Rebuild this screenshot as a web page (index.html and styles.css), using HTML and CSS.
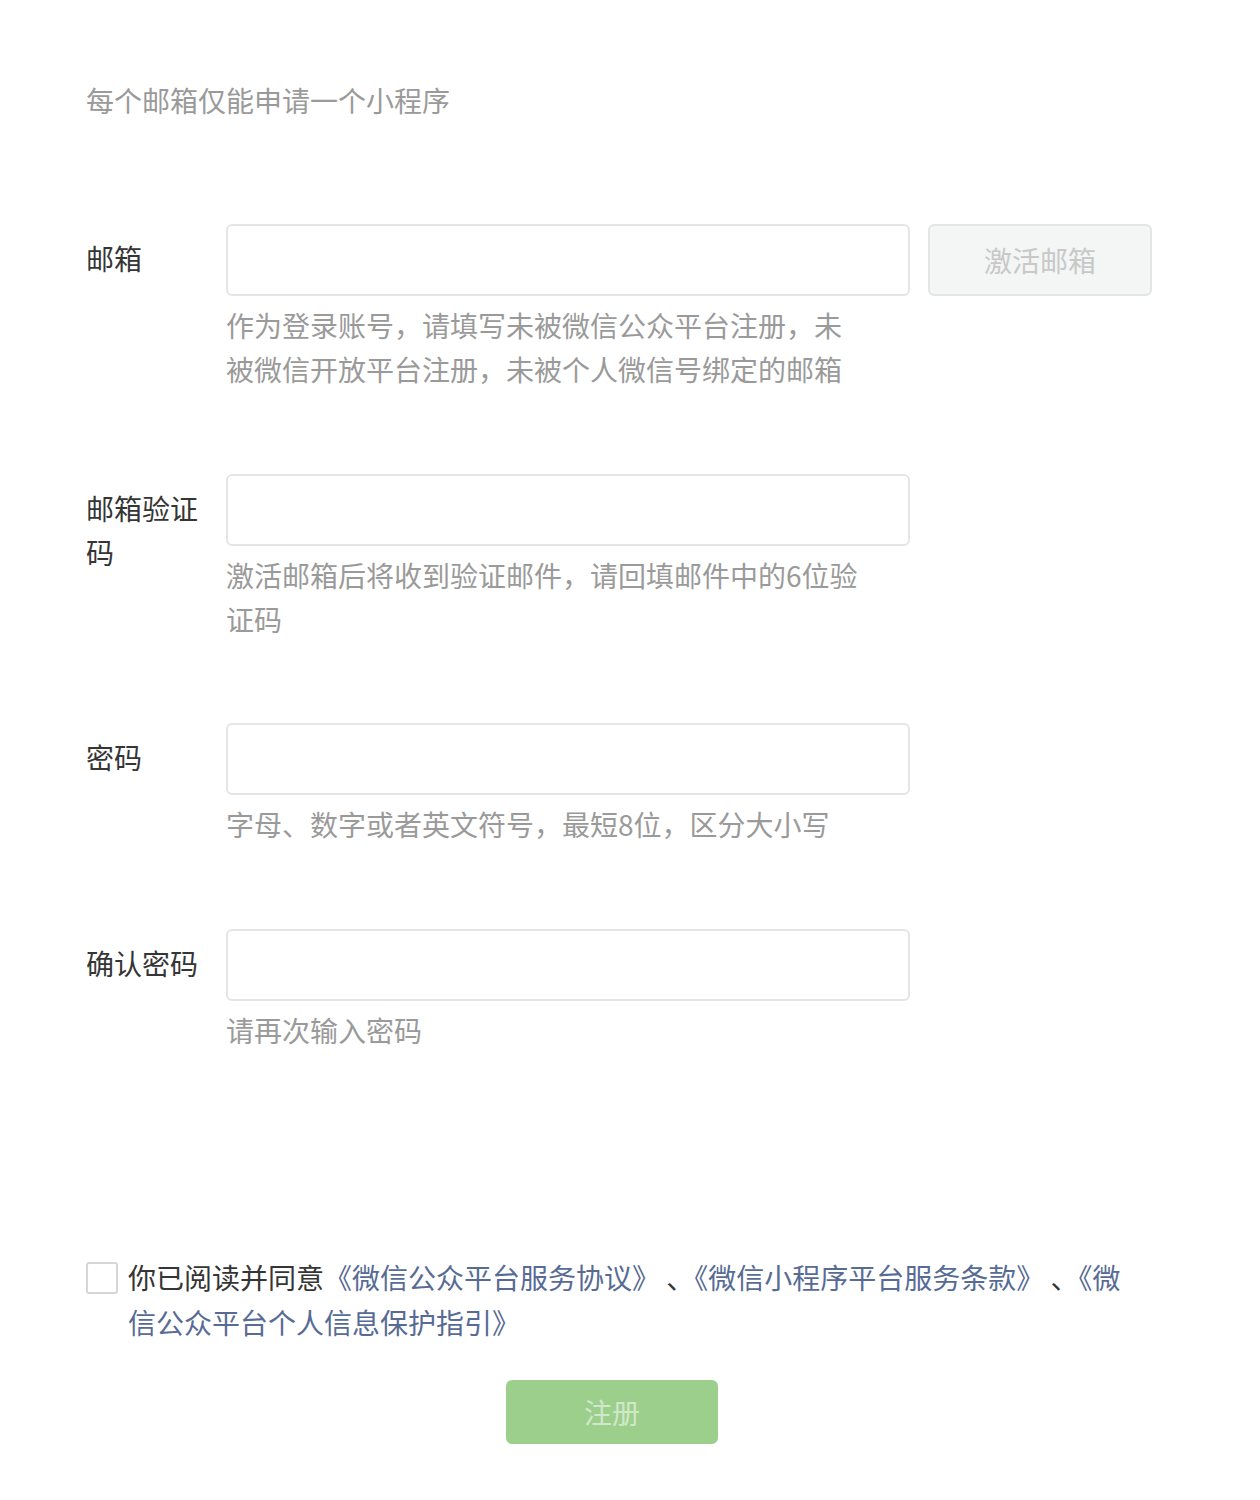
FILE: index.html
```html
<!DOCTYPE html>
<html lang="zh-CN">
<head>
<meta charset="utf-8">
<title>注册</title>
<link rel="stylesheet" href="styles.css">
</head>
<body>
<div class="page">
  <p class="tips">每个邮箱仅能申请一个小程序</p>
  <div class="form">
    <div class="row">
      <div class="label">邮箱</div>
      <div class="field">
        <div class="control">
          <input class="input" type="text">
          <button class="btn-activate" type="button">激活邮箱</button>
        </div>
        <p class="hint">作为登录账号，请填写未被微信公众平台注册，未被微信开放平台注册，未被个人微信号绑定的邮箱</p>
      </div>
    </div>
    <div class="row">
      <div class="label">邮箱验证码</div>
      <div class="field">
        <div class="control"><input class="input" type="text"></div>
        <p class="hint">激活邮箱后将收到验证邮件，请回填邮件中的6位验证码</p>
      </div>
    </div>
    <div class="row">
      <div class="label">密码</div>
      <div class="field">
        <div class="control"><input class="input" type="password"></div>
        <p class="hint">字母、数字或者英文符号，最短8位，区分大小写</p>
      </div>
    </div>
    <div class="row">
      <div class="label">确认密码</div>
      <div class="field">
        <div class="control"><input class="input" type="password"></div>
        <p class="hint">请再次输入密码</p>
      </div>
    </div>
  </div>
  <div class="agree">
    <span class="checkbox"></span>
    <p class="agree-text">你已阅读并同意<a class="link" href="#">《微信公众平台服务协议》</a> 、<a class="link" href="#">《微信小程序平台服务条款》</a> 、<a class="link" href="#">《微信公众平台个人信息保护指引》</a></p>
  </div>
  <div class="submit-wrap">
    <button class="btn-submit" type="button">注册</button>
  </div>
</div>
</body>
</html>
```
FILE: styles.css
```css
* { box-sizing: border-box; }
html, body { margin: 0; padding: 0; background: #fff; }
body {
  font-family: "PingFang SC", "Noto Sans CJK SC", "Noto Sans", sans-serif;
  font-size: 28px;
  color: #353535;
}
.page {
  padding: 78px 0 0 86px;
  width: 1260px;
}
.tips {
  margin: 0;
  line-height: 44px;
  color: #9a9a9a;
}
.form {
  margin-top: 102px;
}
.row {
  display: flex;
  margin-bottom: 82.5px;
}
.row:last-child {
  margin-bottom: 0;
}
.label {
  width: 130px;
  margin-right: 10px;
  padding-top: 12px;
  line-height: 44px;
  color: #353535;
  flex-shrink: 0;
}
.field {
  display: flex;
  flex-direction: column;
}
.control {
  display: flex;
  gap: 18px;
}
.input {
  width: 684px;
  height: 72px;
  border: 2px solid #e5e5e5;
  border-radius: 6px;
  background: #fff;
  outline: none;
  font: inherit;
  padding: 0 16px;
}
.btn-activate {
  width: 224px;
  height: 72px;
  border: 2px solid #e5e5e5;
  border-radius: 6px;
  background: #f4f5f5;
  color: #c8c8c8;
  font: inherit;
  padding: 0;
}
.hint {
  margin: 7px 0 0;
  width: 640px;
  line-height: 44px;
  color: #9a9a9a;
}
.agree {
  display: flex;
  align-items: flex-start;
  margin-top: 203px;
  width: 1050px;
}
.checkbox {
  width: 32px;
  height: 32px;
  border: 2px solid #d6d6d6;
  border-radius: 3px;
  margin-top: 7px;
  margin-right: 10px;
  flex-shrink: 0;
}
.agree-text {
  margin: 0;
  line-height: 45px;
  color: #353535;
}
.link {
  color: #576b95;
  text-decoration: none;
}
.submit-wrap {
  padding-left: 420px;
  margin-top: 35px;
}
.btn-submit {
  width: 212px;
  height: 64px;
  border: none;
  border-radius: 6px;
  background: #9ccf8c;
  color: rgba(255, 255, 255, 0.55);
  font: inherit;
  padding: 0;
}
```
